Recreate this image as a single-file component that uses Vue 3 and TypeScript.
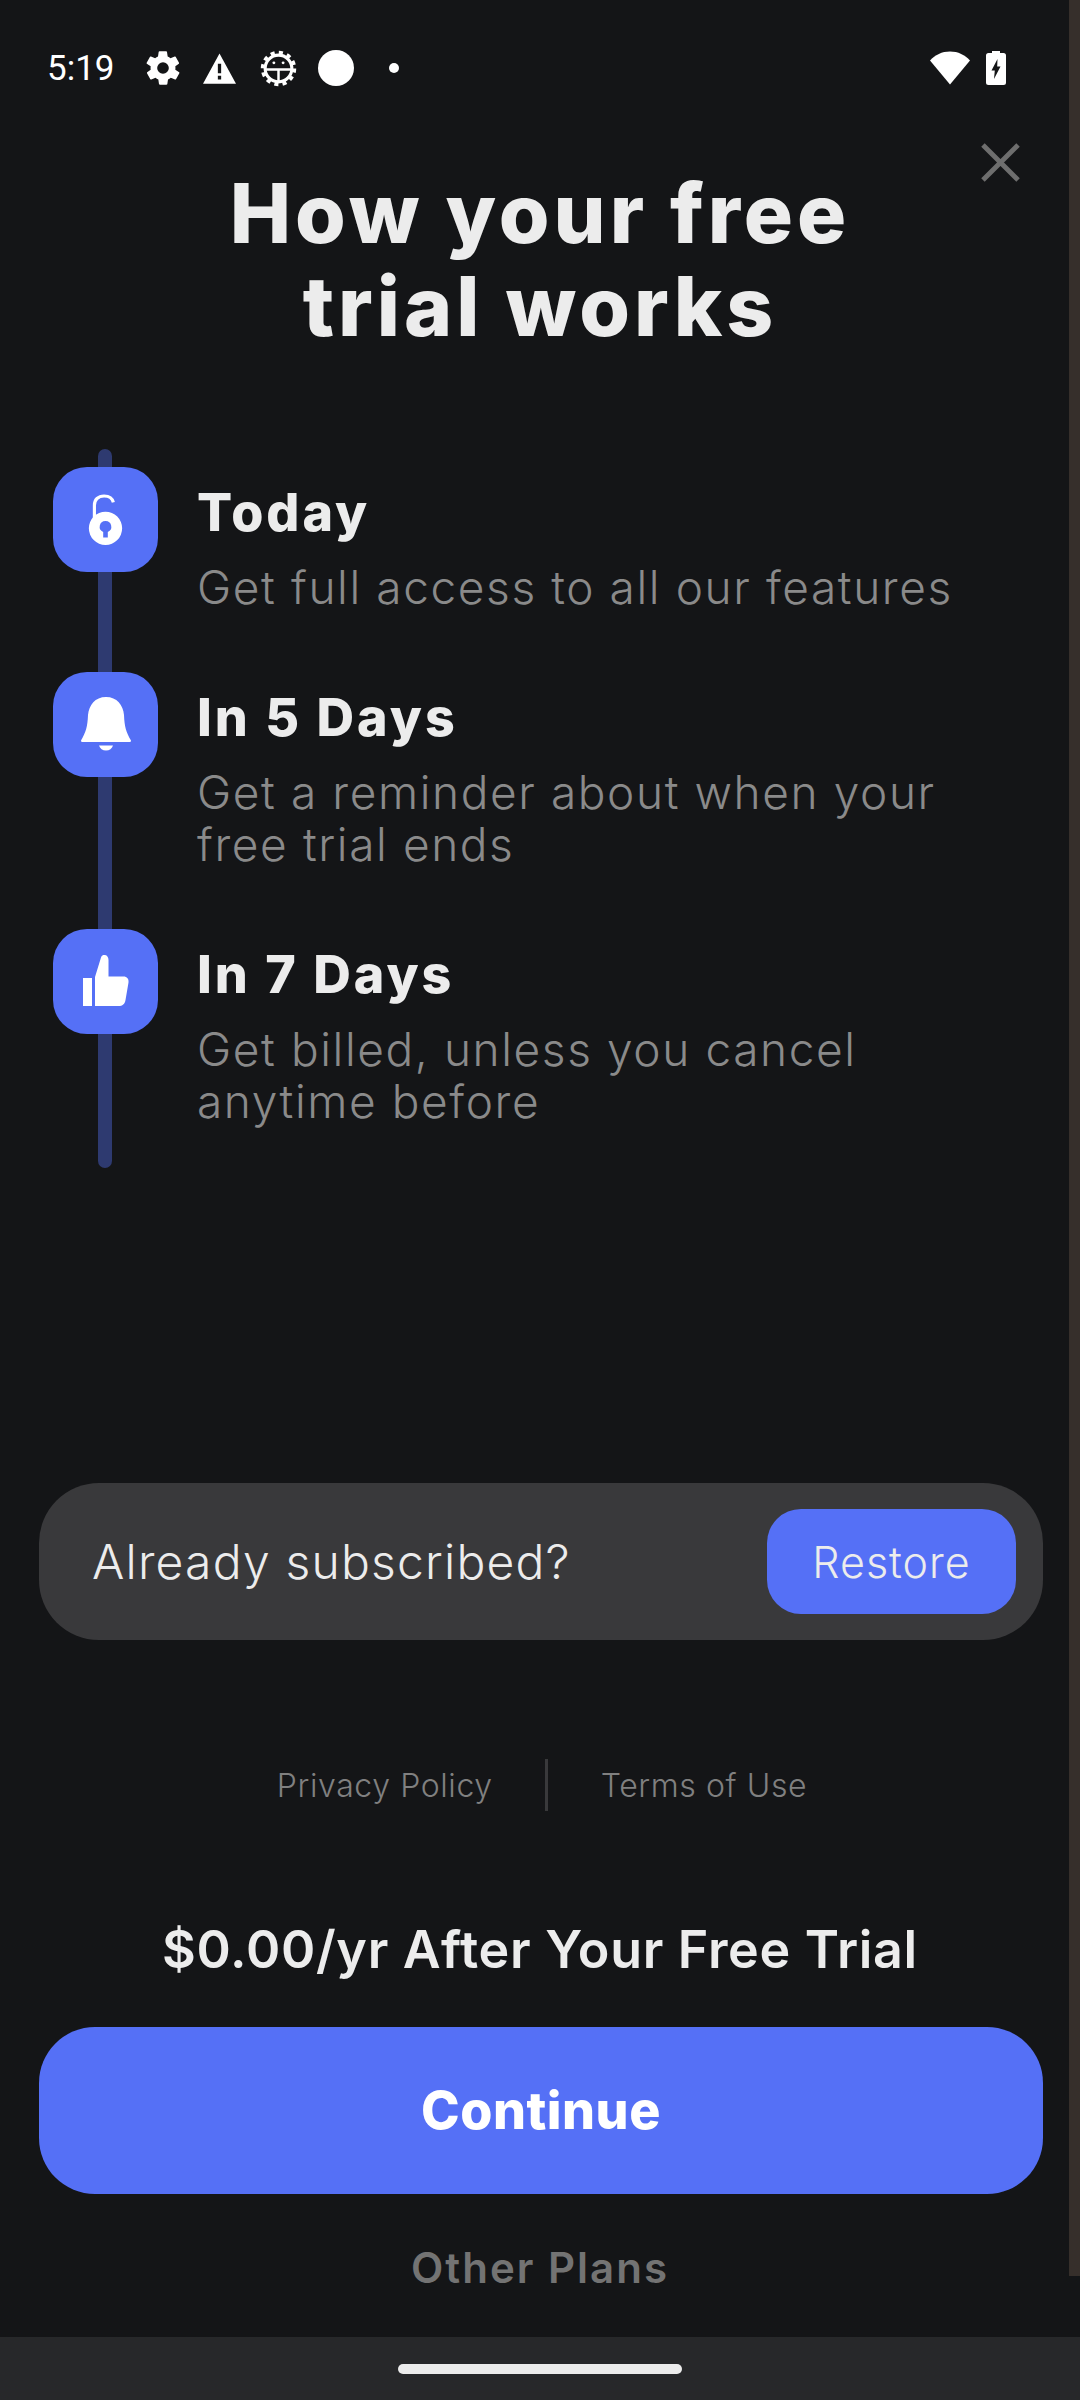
<template>
  <div class="screen">
    <div class="status-bar">
      <span class="clock">5:19</span>
      <svg class="st-icon gear" viewBox="0 0 24 24"><path d="M19.4 13a7.5 7.5 0 0 0 0-2l2.1-1.6a.5.5 0 0 0 .1-.6l-2-3.5a.5.5 0 0 0-.6-.2l-2.5 1a7.3 7.3 0 0 0-1.7-1l-.4-2.7a.5.5 0 0 0-.5-.4h-4a.5.5 0 0 0-.5.4l-.4 2.7a7.3 7.3 0 0 0-1.7 1l-2.5-1a.5.5 0 0 0-.6.2l-2 3.5a.5.5 0 0 0 .1.6L4.6 11a7.5 7.5 0 0 0 0 2l-2.1 1.6a.5.5 0 0 0-.1.6l2 3.5c.1.2.4.3.6.2l2.5-1a7.3 7.3 0 0 0 1.7 1l.4 2.7c0 .2.3.4.5.4h4c.2 0 .5-.2.5-.4l.4-2.7a7.3 7.3 0 0 0 1.7-1l2.5 1c.2.1.5 0 .6-.2l2-3.5a.5.5 0 0 0-.1-.6zM12 15.500a3.500 3.500 0 1 1 0-7 3.500 3.500 0 0 1 0 7z" /></svg>
      <svg class="st-icon warn" viewBox="0 0 24 24"><path fill-rule="evenodd" d="M12 1 24 23H0zM10.800 8.500v7h2.400v-7zM10.800 17.300v2.700h2.400v-2.700z" /></svg>
      <svg class="st-icon bug" viewBox="0 0 36 36">
        <circle cx="18" cy="18" r="13" fill="none" stroke="#fff" stroke-width="3" />
        <circle cx="18" cy="18" r="15.500" fill="none" stroke="#fff" stroke-width="3.500" stroke-dasharray="4 4.100" />
        <path d="M5 19h26M18 19v12" fill="none" stroke="#fff" stroke-width="2.400" />
        <circle cx="13.500" cy="12.500" r="1.400" />
        <circle cx="22.500" cy="12.500" r="1.400" />
      </svg>
      <span class="st-circle"></span>
      <span class="st-dot"></span>
      <span class="st-spacer"></span>
      <svg class="wifi" viewBox="0 0 40 34"><path d="M0 9.500C5 4 12 .6 20 .6S35 4 40 9.500L20 33.500z" /></svg>
      <svg class="battery" viewBox="0 0 20 34">
        <path d="M6 0h8v2h3.500A2.500 2.500 0 0 1 20 4.500V31.500A2.500 2.500 0 0 1 17.500 34H2.500A2.500 2.500 0 0 1 0 31.500V4.500A2.500 2.500 0 0 1 2.500 2H6z" />
        <path class="bolt" d="M11.500 8 5.500 19.500h3.300L8 28l6.500-12.500h-3.300z" />
      </svg>
    </div>

    <header class="head">
      <h1>How your free<br />trial works</h1>
      <svg class="close" viewBox="0 0 40 40"><path d="M2 2l36 36M38 2 2 38" /></svg>
    </header>

    <section class="timeline">
      <span class="rail"></span>
      <div v-for="step in steps" :key="step.title" class="step">
        <div class="step-icon">
          <svg v-if="step.icon === 'lock'" viewBox="0 0 40 56" class="lock">
            <path class="shackle" d="M8 26V12C8 6 12 2 18.500 2c5 0 9 2.500 10 7" />
            <path fill-rule="evenodd" d="M20 19a18 18 0 1 1 0 36 18 18 0 0 1 0-36zM20 29a6.200 6.200 0 0 0-2.500 11.900V47h5v-6.100A6.200 6.200 0 0 0 20 29z" />
          </svg>
          <svg v-else-if="step.icon === 'bell'" viewBox="0 0 50 54" class="bell">
            <path d="M25 0c11 0 17 8 18 18 .5 12 2 17 7 25.500l-.5 1.500H.5L0 43.500C5 35 6.500 30 7 18 8 8 14 0 25 0z" />
            <path d="M18 48.500h14c-1 3-3.500 5-7 5s-6-2-7-5z" />
          </svg>
          <svg v-else viewBox="0 0 46 52" class="thumb">
            <path d="M0 23h9v28H0z" />
            <path d="M12 51V22l6-19.500C18.500.5 20 0 21.500 0 24 0 25.500 2 25.500 5v16.500h15c3.500 0 5.500 2.500 5 6l-3 17.500c-.7 4-3 6-7 6z" />
          </svg>
        </div>
        <div class="step-text">
          <h2>{{ step.title }}</h2>
          <p v-html="step.desc"></p>
        </div>
      </div>
    </section>

    <section class="restore-card">
      <span>Already subscribed?</span>
      <button class="restore">Restore</button>
    </section>

    <nav class="links">
      <a>Privacy Policy</a>
      <i></i>
      <a>Terms of Use</a>
    </nav>

    <p class="price">$0.00/yr After Your Free Trial</p>
    <button class="continue">Continue</button>
    <p class="other">Other Plans</p>

    <div class="nav-bar"><span></span></div>
    <div class="scrollbar"></div>
  </div>
</template>

<script setup lang="ts">
interface Step {
  icon: string;
  title: string;
  desc: string;
}

const steps: Step[] = [
  { icon: "lock", title: "Today", desc: "Get full access to all our features" },
  { icon: "bell", title: "In 5 Days", desc: "Get a reminder about when your<br>free trial ends" },
  { icon: "thumb", title: "In 7 Days", desc: "Get billed, unless you cancel<br>anytime before" },
];
</script>

<style>
html,
body {
  margin: 0;
  background: #141517;
}
</style>

<style scoped>
.screen {
  position: relative;
  width: 1080px;
  height: 2400px;
  overflow: hidden;
  background: #141517;
  color: #ececec;
  font-family: Inter, "Open Sans", sans-serif;
  display: flex;
  flex-direction: column;
}

/* Status bar */
.status-bar {
  display: flex;
  align-items: center;
  height: 136px;
  padding: 0 34px 0 47px;
  box-sizing: border-box;
  color: #fff;
  flex-shrink: 0;
}

.clock {
  font-family: Roboto, sans-serif;
  font-size: 35px;
  width: 96px;
  flex-shrink: 0;
}

.st-icon {
  fill: #fff;
  flex-shrink: 0;
}

.gear {
  width: 40px;
  height: 40px;
  margin-right: 19px;
}

.warn {
  width: 35px;
  height: 33px;
  margin-right: 23px;
}

.bug {
  width: 37px;
  height: 37px;
  margin-right: 21px;
}

.st-circle {
  width: 36px;
  height: 36px;
  border-radius: 50%;
  background: #fff;
  margin-right: 35px;
}

.st-dot {
  width: 10px;
  height: 10px;
  border-radius: 50%;
  background: #fff;
}

.st-spacer {
  flex: 1;
}

.wifi {
  width: 40px;
  height: 34px;
  fill: #fff;
  margin-right: 16px;
}

.battery {
  width: 20px;
  height: 34px;
  fill: #fff;
  margin-right: 40px;
}

.bolt {
  fill: #141517;
}

/* Header */
.head {
  position: relative;
  height: 313px;
}

h1 {
  margin: 0;
  padding-top: 31px;
  font-size: 82px;
  line-height: 93px;
  font-weight: 800;
  text-align: center;
  letter-spacing: 4px;
}

.close {
  position: absolute;
  top: 7px;
  right: 60px;
  width: 39px;
  height: 39px;
  fill: none;
  stroke: #6e6e6e;
  stroke-width: 5;
}

/* Timeline */
.timeline {
  position: relative;
  height: 719px;
  padding: 18px 0 0 53px;
  box-sizing: border-box;
  display: flex;
  flex-direction: column;
  flex-shrink: 0;
}

.rail {
  position: absolute;
  left: 98px;
  top: 0;
  bottom: 0;
  width: 14px;
  border-radius: 7px;
  background: #2e3a70;
}

.step {
  position: relative;
  display: flex;
  gap: 39px;
  padding-bottom: 58px;
}

.step-icon {
  width: 105px;
  height: 105px;
  border-radius: 34px;
  background: #5570f6;
  display: flex;
  align-items: center;
  justify-content: center;
  flex-shrink: 0;
}

.step-icon svg {
  fill: #fff;
}

.lock {
  width: 37px;
  height: 52px;
}

.shackle {
  fill: none;
  stroke: #fff;
  stroke-width: 3.400;
}

.bell {
  width: 50px;
  height: 54px;
}

.thumb {
  width: 46px;
  height: 52px;
}

.step-text {
  padding-top: 18px;
}

h2 {
  margin: 0;
  font-size: 52px;
  line-height: 56px;
  font-weight: 800;
  letter-spacing: 3px;
}

.step-text p {
  margin: 20px 0 0;
  font-size: 46px;
  line-height: 52.500px;
  font-weight: 300;
  letter-spacing: 1.600px;
  color: #8a8a8a;
  white-space: nowrap;
}

/* Restore card */
.restore-card {
  margin: 315px 37px 0 39px;
  height: 157px;
  border-radius: 60px;
  background: #39393b;
  padding: 0 27px 0 53px;
  display: flex;
  align-items: center;
  justify-content: space-between;
  font-size: 48px;
  font-weight: 300;
  letter-spacing: 1.200px;
  flex-shrink: 0;
}

.restore {
  width: 249px;
  height: 105px;
  border: 0;
  border-radius: 34px;
  background: #5570f6;
  color: #ececec;
  font: inherit;
  font-size: 43px;
  letter-spacing: 1px;
}

/* Links */
.links {
  margin-top: 119px;
  padding-left: 4px;
  height: 52px;
  display: flex;
  align-items: center;
  justify-content: center;
  font-size: 32px;
  font-weight: 300;
  letter-spacing: 0.600px;
  color: #808080;
  flex-shrink: 0;
}

.links i {
  width: 3px;
  height: 52px;
  margin: 0 53px 0 52px;
  background: #39393b;
}

/* Bottom */
.price {
  margin: 108px 0 0;
  height: 62px;
  line-height: 62px;
  text-align: center;
  font-size: 52px;
  font-weight: 600;
  letter-spacing: 0.700px;
}

.continue {
  margin: 46px 37px 0 39px;
  height: 167px;
  border: 0;
  border-radius: 56px;
  background: #5570f6;
  color: #fff;
  font: inherit;
  font-size: 52px;
  font-weight: 800;
  letter-spacing: 0.500px;
  flex-shrink: 0;
}

.other {
  margin: 48px 0 0;
  height: 52px;
  line-height: 52px;
  text-align: center;
  font-size: 42px;
  font-weight: 600;
  letter-spacing: 2px;
  color: #737373;
}

.nav-bar {
  position: absolute;
  left: 0;
  right: 0;
  bottom: 0;
  height: 63px;
  background: #27282a;
  display: flex;
  align-items: center;
  justify-content: center;
}

.nav-bar span {
  width: 284px;
  height: 10px;
  border-radius: 5px;
  background: #ececec;
}

.scrollbar {
  position: absolute;
  top: 0;
  right: 0;
  width: 11px;
  height: 2276px;
  background: #362f2b;
}
</style>
